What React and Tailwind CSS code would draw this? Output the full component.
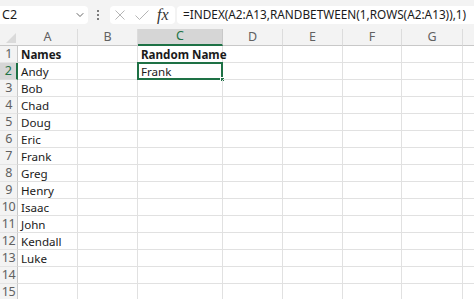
import { ChevronDown } from 'lucide-react'

const cols = ['A', 'B', 'C', 'D', 'E', 'F', 'G']
const names = ['Andy', 'Bob', 'Chad', 'Doug', 'Eric', 'Frank', 'Greg', 'Henry', 'Isaac', 'John', 'Kendall', 'Luke']

function cellFor(row, col) {
  if (col === 'A') {
    if (row === 1) return <span className="font-bold">Names</span>
    if (row >= 2 && row <= 13) return names[row - 2]
  }
  if (col === 'C') {
    if (row === 1) return <span className="font-bold">Random Name</span>
    if (row === 2) return 'Frank'
  }
  return null
}

export default function App() {
  const rows = Array.from({ length: 15 }, (_, i) => i + 1)

  return (
    <div className="w-[474px] h-[299px] overflow-hidden bg-white text-[#1a1a1a]" style={{ fontFamily: '"Noto Sans", "Open Sans", sans-serif' }}>
      {/* formula bar */}
      <div className="h-[29px] bg-[#f3f3f3] flex items-center pt-px">
        <div className="w-[88px] h-[18px] bg-white rounded-r-[4px] flex items-center justify-between pl-[2px] pr-[2px] text-[12.5px]">
          <span>C2</span>
          <ChevronDown size={12} strokeWidth={1.8} className="text-[#555]" />
        </div>
        <div className="w-[20px] flex flex-col items-center gap-[2px]">
          <span className="w-[2px] h-[2px] bg-[#555] rounded-full" />
          <span className="w-[2px] h-[2px] bg-[#555] rounded-full" />
          <span className="w-[2px] h-[2px] bg-[#555] rounded-full" />
        </div>
        <div className="ml-[2px] w-[65px] h-[18px] bg-white rounded-[4px] flex items-center pl-[5px]">
          <svg width="10" height="10" viewBox="0 0 10 10" className="text-[#b5b5b5]">
            <path d="M0.5 0.5 L9.5 9.5 M9.5 0.5 L0.5 9.5" stroke="currentColor" strokeWidth="1" fill="none" />
          </svg>
          <svg width="14" height="10" viewBox="0 0 14 10" className="ml-[10px] text-[#b5b5b5]">
            <path d="M0.5 5.5 L4.5 9.5 L13.5 0.5" stroke="currentColor" strokeWidth="1" fill="none" />
          </svg>
          <span className="ml-[8px] text-[16px] italic leading-none text-[#333]" style={{ fontFamily: '"Liberation Serif", serif' }}>fx</span>
        </div>
        <div className="ml-[2px] flex-1 h-[18px] bg-white rounded-l-[4px] flex items-center pl-[6px] text-[11.8px] whitespace-nowrap">
          =INDEX(A2:A13,RANDBETWEEN(1,ROWS(A2:A13)),1)
        </div>
      </div>

      {/* grid */}
      <div className="grid grid-cols-[18px_60px_60px_85px_60px_60px_59px_61px_1fr] auto-rows-[17px] text-[11.6px]">
        <div className="bg-[#f3f3f3] border-b border-[#c8c8c8] flex items-end justify-end p-[2px]">
          <div className="w-0 h-0 border-l-[10px] border-l-transparent border-b-[10px] border-b-[#dadada]" />
        </div>
        {cols.map((c) => (
          <div
            key={c}
            className={
              c === 'C'
                ? 'bg-[#d6d6d6] border-b-2 border-b-[#1e7145] border-r border-r-[#c8c8c8] flex items-center justify-center text-[#217346] text-[12.5px]'
                : 'bg-[#f3f3f3] border-b border-b-[#c8c8c8] border-r border-r-[#dcdcdc] flex items-center justify-center text-[#616161] text-[12.5px]'
            }
          >
            {c}
          </div>
        ))}
        <div className="bg-[#f3f3f3] border-b border-b-[#c8c8c8]" />

        {rows.map((r) => (
          <div key={r} className="contents">
            <div
              className={
                r === 2
                  ? 'bg-[#d6d6d6] border-r-2 border-r-[#1e7145] border-b border-b-[#dcdcdc] flex items-center justify-center text-[#217346] text-[12.5px] tracking-[-0.5px]'
                  : 'bg-[#f3f3f3] border-r border-r-[#c8c8c8] border-b border-b-[#e4e4e4] flex items-center justify-center text-[#616161] text-[12.5px] tracking-[-0.5px]'
              }
            >
              {r}
            </div>
            {cols.map((c) => (
              <div key={c} className="relative border-r border-b border-[#e1e1e1] flex items-end pl-[3px] pb-[1px] leading-none whitespace-nowrap">
                {cellFor(r, c)}
                {r === 2 && c === 'C' && (
                  <>
                    <div className="absolute -left-px -top-px -right-px -bottom-px border-2 border-[#1e7145] pointer-events-none" />
                    <div className="absolute -right-[3px] -bottom-[3px] w-[5px] h-[5px] bg-[#1e7145] border border-white" />
                  </>
                )}
              </div>
            ))}
            <div className="border-b border-[#e1e1e1]" />
          </div>
        ))}
      </div>
    </div>
  )
}
